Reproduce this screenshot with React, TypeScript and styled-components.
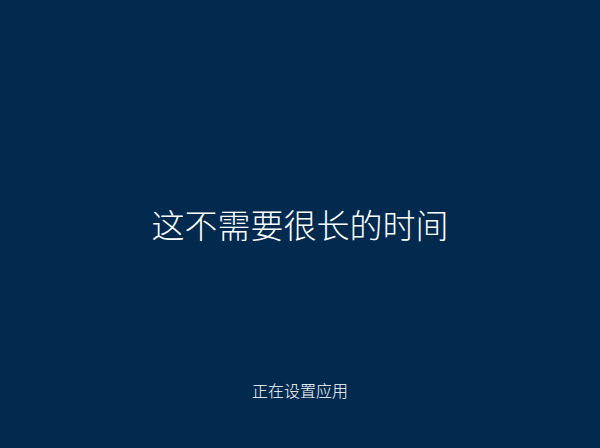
import React from 'react';
import styled, { createGlobalStyle } from 'styled-components';

const GlobalStyle = createGlobalStyle`
  html, body {
    margin: 0;
    padding: 0;
    height: 100%;
    background-color: #022a4e;
  }
  #root {
    height: 100%;
  }
`;

const Screen = styled.div`
  display: flex;
  flex-direction: column;
  align-items: center;
  height: 100vh;
  background-color: #022a4e;
  color: #ffffff;
  font-family: 'Noto Sans CJK SC', 'Noto Sans', sans-serif;
  overflow: hidden;
`;

const Center = styled.main`
  flex: 1;
  display: flex;
  align-items: center;
  justify-content: center;
  padding-top: 66px;
`;

const Title = styled.h1`
  margin: 0;
  font-size: 33px;
  font-weight: 300;
  line-height: 1;
`;

const Status = styled.p`
  margin: 0 0 50px;
  font-size: 16px;
  font-weight: 300;
  line-height: 1;
`;

const App = () => {
  return (
    <>
      <GlobalStyle />
      <Screen>
        <Center>
          <Title>这不需要很长的时间</Title>
        </Center>
        <Status>正在设置应用</Status>
      </Screen>
    </>
  );
};

export default App;
